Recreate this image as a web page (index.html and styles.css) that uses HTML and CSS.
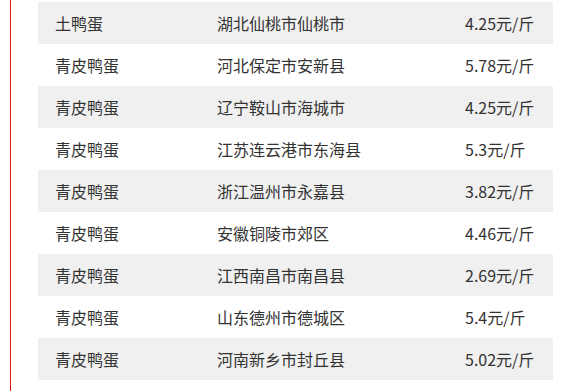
FILE: index.html
```html
<!DOCTYPE html>
<html lang="zh-CN">
<head>
<meta charset="utf-8">
<title>鸭蛋价格</title>
<link rel="stylesheet" href="styles.css">
</head>
<body>
<div class="page">
  <div class="table">
    <div class="row"><span>土鸭蛋</span><span>湖北仙桃市仙桃市</span><span>4.25元/斤</span></div>
    <div class="row"><span>青皮鸭蛋</span><span>河北保定市安新县</span><span>5.78元/斤</span></div>
    <div class="row"><span>青皮鸭蛋</span><span>辽宁鞍山市海城市</span><span>4.25元/斤</span></div>
    <div class="row"><span>青皮鸭蛋</span><span>江苏连云港市东海县</span><span>5.3元/斤</span></div>
    <div class="row"><span>青皮鸭蛋</span><span>浙江温州市永嘉县</span><span>3.82元/斤</span></div>
    <div class="row"><span>青皮鸭蛋</span><span>安徽铜陵市郊区</span><span>4.46元/斤</span></div>
    <div class="row"><span>青皮鸭蛋</span><span>江西南昌市南昌县</span><span>2.69元/斤</span></div>
    <div class="row"><span>青皮鸭蛋</span><span>山东德州市德城区</span><span>5.4元/斤</span></div>
    <div class="row"><span>青皮鸭蛋</span><span>河南新乡市封丘县</span><span>5.02元/斤</span></div>
  </div>
</div>
</body>
</html>
```

FILE: styles.css
```css
html, body {
  margin: 0;
  padding: 0;
  background: #ffffff;
}

body {
  font-family: "Noto Sans CJK SC", "Noto Sans", sans-serif;
  font-size: 16px;
  color: #333333;
}

.page {
  margin-left: 10px;
  border-left: 1px solid #e3140c;
  min-height: 391px;
  padding: 2px 0 0 27px;
  box-sizing: border-box;
}

.table {
  width: 515px;
  display: flex;
  flex-direction: column;
}

.row {
  display: grid;
  grid-template-columns: 162px 248px 1fr;
  height: 42px;
  align-items: center;
  padding-left: 17px;
  line-height: 20px;
}

.row:nth-child(odd) {
  background: #f0f0f0;
}
```
